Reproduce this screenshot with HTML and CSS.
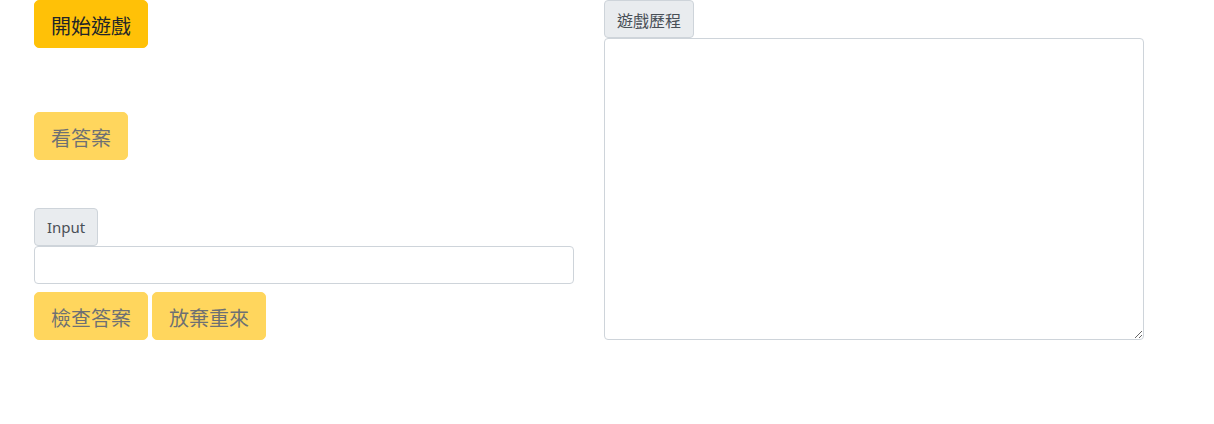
FILE: index.html
```html
<!DOCTYPE html>
<html lang="zh-Hant">
<head>
<meta charset="utf-8">
<title>Game</title>
<link rel="stylesheet" href="styles.css">
</head>
<body>
<div class="page">
  <div class="col">
    <button class="btn btn-lg btn-warning">開始遊戲</button>
    <button class="btn btn-lg btn-warning disabled spaced-1" disabled>看答案</button>
    <div class="field spaced-2">
      <span class="tag tag-latin">Input</span>
      <input class="control" type="text">
    </div>
    <div class="actions">
      <button class="btn btn-lg btn-warning disabled" disabled>檢查答案</button>
      <button class="btn btn-lg btn-warning disabled" disabled>放棄重來</button>
    </div>
  </div>
  <div class="col">
    <span class="tag">遊戲歷程</span>
    <textarea class="control history"></textarea>
  </div>
</div>
</body>
</html>
```

FILE: styles.css
```css
* { box-sizing: border-box; }
body {
  margin: 0;
  font-family: "Noto Sans", "Noto Sans CJK TC", sans-serif;
  color: #212529;
  background: #fff;
}
.page {
  display: flex;
  gap: 30px;
  padding-left: 34px;
}
.col {
  width: 540px;
  display: flex;
  flex-direction: column;
  align-items: flex-start;
}
.btn {
  font-family: inherit;
  border: 1px solid transparent;
  cursor: pointer;
  text-align: center;
}
.btn-lg {
  font-size: 20px;
  line-height: 30px;
  padding: 11px 16px 5px;
  border-radius: 5px;
  height: 48px;
}
.btn-warning {
  background: #ffc107;
  border-color: #ffc107;
  color: #212529;
}
.btn.disabled {
  opacity: 0.65;
  cursor: default;
}
.spaced-1 { margin-top: 64px; }
.spaced-2 { margin-top: 48px; }
.field {
  width: 100%;
  display: flex;
  flex-direction: column;
  align-items: flex-start;
}
.tag {
  display: inline-block;
  background: #e9ecef;
  border: 1px solid #ced4da;
  border-radius: 4px;
  color: #495057;
  font-size: 16px;
  line-height: 24px;
  padding: 8px 12px 4px;
  height: 38px;
}
.tag-latin {
  font-size: 15px;
  padding: 6px 12px;
}
.control {
  display: block;
  width: 100%;
  border: 1px solid #ced4da;
  border-radius: 4px;
  background: #fff;
  font-family: inherit;
  font-size: 16px;
  color: #495057;
  padding: 6px 12px;
  margin: 0;
}
.field .control { height: 38px; }
.actions {
  display: flex;
  gap: 4px;
  margin-top: 8px;
}
.history {
  height: 302px;
  resize: vertical;
}
```
